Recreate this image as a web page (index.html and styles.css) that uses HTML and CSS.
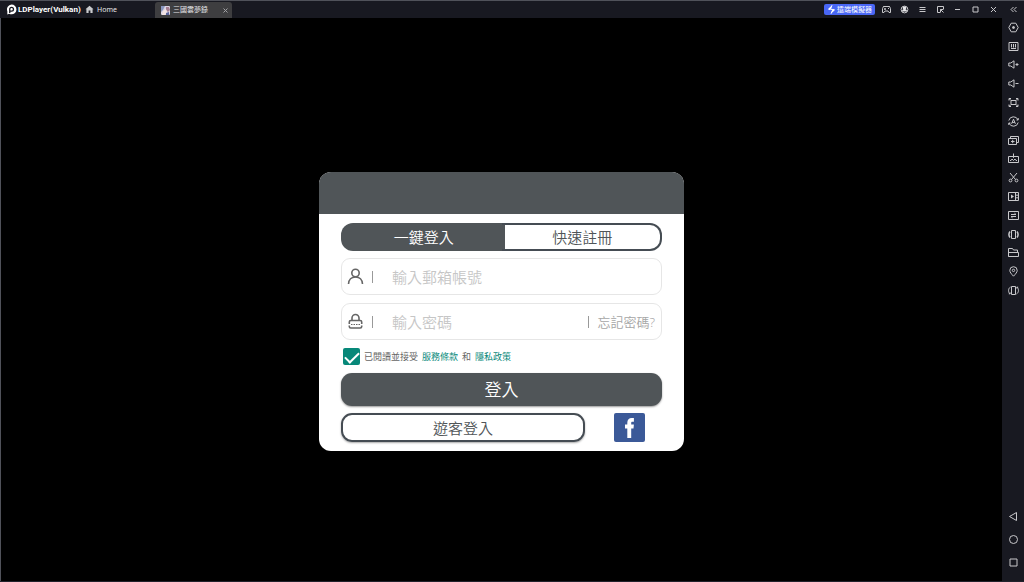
FILE: index.html
```
<!DOCTYPE html>
<html lang="zh-Hant">
<head>
<meta charset="utf-8">
<title>LDPlayer(Vulkan)</title>
<link rel="stylesheet" href="styles.css">
</head>
<body>
<div class="window">
  <header class="titlebar">
    <div class="brand">
      <svg class="brand-logo" viewBox="0 0 10 10"><path d="M5 .4a4.5 4.5 0 1 1 0 9 4.500 4.500 0 0 1-2-.5L1.200 9.500V6.500A4.500 4.500 0 0 1 5 .4z" fill="#fff"/><path d="M3.400 8.200V4.700a1.700 1.700 0 1 1 1.700 1.700H3.400" fill="none" stroke="#181921" stroke-width="1.200"/></svg>
      <span class="brand-name">LDPlayer(Vulkan)</span>
    </div>
    <a class="home" href="#">
      <svg class="home-icon" viewBox="0 0 9 9"><path d="M4.500.8 8.500 4.300H7.600V8H5.400V5.500H3.600V8H1.400V4.300H.5z" fill="#c9cacd"/></svg>
      <span>Home</span>
    </a>
    <div class="tab">
      <svg class="game-icon" viewBox="0 0 9 9"><rect width="9" height="9" rx="1" fill="#d9d3e2"/><path d="M0 0h4L2 4 0 6z" fill="#8794bd"/><path d="M5 1h3l1 3-2 2-2-2z" fill="#a37d90"/><path d="M2 5l3-2 1 3-2 3H1z" fill="#f3e4e3"/><path d="M5 7l3-1v3H5z" fill="#58639b"/></svg>
      <span class="tab-name">三國雲夢錄</span>
      <button class="tab-close" aria-label="關閉分頁"><svg class="x-icon" viewBox="0 0 5 5"><path d="M.5.5l4 4m0-4l-4 4"/></svg></button>
    </div>
    <button class="remote">
      <svg class="remote-icon" viewBox="0 0 9 9"><path d="M5 .3.800 4.300 3.200 5.200zM4 8.700l4.200-4L5.800 3.800z" fill="#fff"/><path d="M5 .3 3.500 4.200 5.800 4.600 4 8.700" fill="none" stroke="#fff"/></svg>
      <span>遠端模擬器</span>
    </button>
    <div class="window-tools">
      <button class="tool" aria-label="遊戲手把"><svg class="icon" viewBox="0 0 11 11"><path d="M2.500 2.500h6l1 2v4H8L7 7H4L3 8.500H1.500v-4zM3 5h2M4 4v2M7 4.500h1M2.500 2.500h2M6.500 2.500h2"/></svg></button>
      <button class="tool" aria-label="帳號"><svg class="icon" viewBox="0 0 11 11"><circle cx="5.500" cy="5.500" r="3.400"/><path d="M5.500 2.500a1.500 1.500 0 0 1 1 2.800c1 .4 1.500 1 1.500 2.200H3c0-1.200.5-1.800 1.500-2.200a1.500 1.500 0 0 1 1-2.800z" fill="#e6e6e8" stroke="none"/></svg></button>
      <button class="tool" aria-label="選單"><svg class="icon" viewBox="0 0 11 11"><path d="M2.500 3.500h6M2.500 5.500h6M2.500 7.500h6"/></svg></button>
      <button class="tool" aria-label="小視窗"><svg class="icon" viewBox="0 0 11 11"><path d="M5 8.500H2.500v-6h6V5M5.500 8.500v-3h3M5.500 5.500l3 3"/></svg></button>
      <button class="tool" aria-label="最小化"><svg class="icon" viewBox="0 0 11 11"><path d="M3 5.500h5"/></svg></button>
      <button class="tool" aria-label="最大化"><svg class="icon" viewBox="0 0 11 11"><path d="M3 3h5v5H3z"/></svg></button>
      <button class="tool" aria-label="關閉"><svg class="icon" viewBox="0 0 11 11"><path d="M3 3l5 5m0-5L3 8"/></svg></button>
    </div>
    <button class="collapse" aria-label="收合"><svg class="icon" viewBox="0 0 11 11"><path d="M5.500 3L3 5.500 5.500 8M8.500 3L6 5.500 8.500 8"/></svg></button>
  </header>

  <div class="workspace">
    <main class="screen">
      <form class="card">
        <div class="card-head"></div>
        <div class="card-body">
          <div class="modes">
            <button type="button" class="mode mode-on">一鍵登入</button>
            <button type="button" class="mode">快速註冊</button>
          </div>
          <div class="field">
            <svg class="field-icon" viewBox="0 0 17 17"><circle cx="8.500" cy="5" r="3.700"/><path d="M1.500 16c.2-4.200 3-7 7-7s6.800 2.800 7 7"/></svg>
            <span class="bar"></span>
            <input class="entry" type="text" aria-label="郵箱帳號" placeholder="輸入郵箱帳號">
          </div>
          <div class="field">
            <svg class="field-icon" viewBox="0 0 17 17"><path d="M5 7.500V5a3.500 3.500 0 0 1 7 0v2.500M2.300 11V9q0-1.500 1.500-1.500h9.400q1.500 0 1.500 1.500v2M2.300 12.500v1q0 1.500 1.500 1.500h9.400q1.500 0 1.500-1.500v-1"/><path d="M4 11.500h9.500" stroke-width="1" stroke-dasharray="1.500 1"/></svg>
            <span class="bar"></span>
            <input class="entry" type="password" aria-label="密碼" placeholder="輸入密碼">
            <span class="bar"></span>
            <a class="forgot" href="#">忘記密碼?</a>
          </div>
          <div class="terms">
            <input class="check" type="checkbox" id="agree" checked>
            <label for="agree">已閱讀並接受</label>
            <a href="#">服務條款</a>
            <span>和</span>
            <a href="#">隱私政策</a>
          </div>
          <button type="submit" class="login">登入</button>
          <div class="others">
            <button type="button" class="guest">遊客登入</button>
            <button type="button" class="facebook" aria-label="Facebook"><svg class="fb-icon" viewBox="0 0 31 29"><path d="M13.300 25V15.500H11v-4h2.300V9.800c0-3.200 1.700-4.900 4.500-4.900h2.100v3.800h-1.400c-1 0-1.300.5-1.300 1.400v1.400h2.700l-.4 4h-2.300V25z" fill="#fff"/></svg></button>
          </div>
        </div>
      </form>
    </main>

    <aside class="sidebar">
      <div class="actions">
        <button class="action" aria-label="設定"><svg class="icon" viewBox="0 0 11 11"><path d="M3.200 1.200h4.600l2.400 4.300-2.400 4.300H3.200L.8 5.500z"/><circle cx="5.500" cy="5.500" r="1" fill="#c8c8cb"/></svg></button>
        <button class="action" aria-label="鍵盤"><svg class="icon" viewBox="0 0 11 11"><path d="M1 1.500h9v8H1zM3.500 3v3.500M5.500 3v3.500M7.500 3v3.500M3 7.500h5"/></svg></button>
        <button class="action" aria-label="增加音量"><svg class="icon" viewBox="0 0 11 11"><path d="M.8 4h2L6 1.800v7.400L2.800 7h-2zM7.500 5.500h3M9 4v3"/></svg></button>
        <button class="action" aria-label="降低音量"><svg class="icon" viewBox="0 0 11 11"><path d="M.8 4h2L6 1.800v7.400L2.800 7h-2zM7.500 5.500h3"/></svg></button>
        <button class="action" aria-label="全螢幕"><svg class="icon" viewBox="0 0 11 11"><path d="M3 3.500h5v4H3zM1 3.500v-2h2M8 1.500h2v2M10 7.500v2H8M3 9.500H1v-2M1.500 2L3 3.500M9.500 2L8 3.500M1.500 9L3 7.500M9.500 9L8 7.500"/></svg></button>
        <button class="action" aria-label="同步"><svg class="icon" viewBox="0 0 11 11"><path d="M.8 4.500a4.800 4.800 0 0 1 9.200-.5M10.200 6.500a4.800 4.800 0 0 1-9.200.5M10.200 2v2H8.500M.8 9V7h1.700M3.600 7.800l1.900-4.600 1.900 4.600M4.200 6.400h2.600"/></svg></button>
        <button class="action" aria-label="多開"><svg class="icon" viewBox="0 0 11 11"><path d="M.5 3.500h8v6h-8zM2.500 3V1.500h8v6H9M3 6.500h3.500M4.700 4.800v3.400"/></svg></button>
        <button class="action" aria-label="安裝"><svg class="icon" viewBox="0 0 11 11"><path d="M4 3.500H.5v6h10v-6H7M5.500.5v4M4 3l1.500 1.500L7 3M2 7.500h1l1-1.500 1.500 1.500L7 6l1 1.500h1"/></svg></button>
        <button class="action" aria-label="截圖"><svg class="icon" viewBox="0 0 11 11"><path d="M2 1l5.500 6.500M9 1L3.500 7.500"/><circle cx="2.500" cy="8.500" r="1.400"/><circle cx="8.500" cy="8.500" r="1.400"/></svg></button>
        <button class="action" aria-label="錄影"><svg class="icon" viewBox="0 0 11 11"><path d="M.5 1.500h10v8H.5zM7.500 1.500v8M7.500 4.200h3M7.500 6.800h3"/><path d="M3 3.500v4L6 5.500z" fill="#c8c8cb" stroke="none"/></svg></button>
        <button class="action" aria-label="操作錄製"><svg class="icon" viewBox="0 0 11 11"><path d="M.5 1.500h10v8H.5zM3 4.500h5L6.500 3.200M8 6.500H3l1.500 1.300"/></svg></button>
        <button class="action" aria-label="震動"><svg class="icon" viewBox="0 0 11 11"><path d="M3.500 1.500h4v8h-4z"/><path d="M2 2.500C.7 4.300.7 6.700 2 8.500M9 2.500c1.300 1.800 1.300 4.200 0 6" stroke-width="1.500"/></svg></button>
        <button class="action" aria-label="共享資料夾"><svg class="icon" viewBox="0 0 11 11"><path d="M.5 9.500v-8h4L5.500 3H9.500v2M.5 5.500h10v4H.5z"/></svg></button>
        <button class="action" aria-label="定位"><svg class="icon" viewBox="0 0 11 11"><path d="M5.500 10.200C3.300 7.800 1.800 6.200 1.800 4.400a3.700 3.700 0 0 1 7.400 0c0 1.800-1.500 3.400-3.700 5.800z"/><circle cx="5.500" cy="4.400" r="1.200"/></svg></button>
        <button class="action" aria-label="旋轉"><svg class="icon" viewBox="0 0 11 11"><path d="M3.500 1.500h4v8h-4zM2.500 2C0 3.500 0 7 2 9M8.500 9c2.500-1.500 2.500-5 .5-7M.8 8.800H2.200V7.500M10.200 2.200H8.800v1.300"/></svg></button>
      </div>
      <div class="nav">
        <button class="nav-key" aria-label="返回"><svg class="icon" viewBox="0 0 11 11"><path d="M8.500 1.500v8L1.500 5.500z"/></svg></button>
        <button class="nav-key" aria-label="主畫面"><svg class="icon" viewBox="0 0 11 11"><circle cx="5.500" cy="5.500" r="4"/></svg></button>
        <button class="nav-key" aria-label="最近使用"><svg class="icon" viewBox="0 0 11 11"><path d="M2 2h7v7H2z"/></svg></button>
      </div>
    </aside>
  </div>
</div>
</body>
</html>
```
FILE: styles.css
```
* {
  box-sizing: border-box;
}

body {
  margin: 0;
  background: #000;
  font-family: "Noto Sans", "Noto Sans CJK TC", sans-serif;
}

button {
  margin: 0;
  padding: 0;
  border: 0;
  background: none;
  color: inherit;
  font: inherit;
}

a {
  color: inherit;
  text-decoration: none;
}

svg {
  display: block;
  flex: none;
}

.window {
  display: flex;
  flex-direction: column;
  min-height: 100vh;
  border-bottom: 1px solid #20222c;
}

.titlebar {
  display: flex;
  align-items: center;
  height: 18px;
  padding-left: 6px;
  border-top: 1px solid #50525a;
  background: #181921;
  color: #e6e6e8;
  font-size: 7px;
  line-height: 10px;
}

.brand {
  display: flex;
  align-items: center;
  gap: 1px;
  width: 79px;
}

.brand-logo {
  width: 11px;
  height: 11px;
}

.brand-name {
  color: #fff;
  font-family: Roboto, "Noto Sans", sans-serif;
  font-size: 8px;
  font-weight: 700;
  white-space: nowrap;
}

.home {
  display: flex;
  align-items: center;
  gap: 3px;
  width: 70px;
}

.home-icon {
  width: 9px;
  height: 9px;
}

.tab {
  display: flex;
  align-items: center;
  align-self: flex-end;
  gap: 3px;
  width: 77px;
  height: 16px;
  padding: 0 4px 0 6px;
  border-radius: 3px 3px 0 0;
  background: #3e3e40;
}

.game-icon {
  width: 9px;
  height: 9px;
}

.tab-close {
  margin-left: auto;
}

.x-icon {
  width: 5px;
  height: 5px;
  fill: none;
  stroke: #a2a2a5;
  stroke-width: 1;
}

.remote {
  display: flex;
  align-items: center;
  justify-content: center;
  gap: 1px;
  width: 51px;
  height: 11px;
  margin-left: auto;
  border-radius: 2px;
  background: #4967f5;
  color: #fff;
}

.remote-icon {
  width: 9px;
  height: 9px;
}

.window-tools {
  display: flex;
  width: 127px;
  padding-left: 3px;
}

.tool {
  display: flex;
  flex: 1;
  justify-content: center;
}

.collapse {
  display: flex;
  justify-content: center;
  width: 22px;
}

.icon {
  width: 11px;
  height: 11px;
  fill: none;
  stroke: #c8c8cb;
  stroke-width: 1;
}

.workspace {
  display: flex;
  flex: 1;
}

.screen {
  display: flex;
  flex: 1;
  align-items: center;
  justify-content: center;
  padding-top: 24px;
  border-left: 1px solid #50525a;
}

.sidebar {
  display: flex;
  flex-direction: column;
  justify-content: space-between;
  width: 22px;
  padding-bottom: 7px;
  background: #181921;
}

.actions {
  display: flex;
  flex-direction: column;
  height: 282px;
}

.action {
  display: flex;
  flex: 1;
  align-items: center;
  justify-content: center;
}

.nav-key {
  display: flex;
  align-items: center;
  justify-content: center;
  width: 100%;
  height: 23px;
}

.card {
  width: 365px;
  border-radius: 12px;
  overflow: hidden;
  background: #fff;
}

.card-head {
  height: 42px;
  background: #505558;
}

.card-body {
  display: flex;
  flex-direction: column;
  padding: 9px 22px;
  color: #505558;
  font-size: 15px;
  font-weight: 350;
  line-height: 20px;
}

.modes {
  display: grid;
  grid-template-columns: 51fr 49fr;
  height: 28px;
  padding: 2px;
  border-radius: 12px;
  background: linear-gradient(90deg, #505558 50%, #454c53 50%);
}

.mode {
  border-radius: 0 10px 10px 0;
  background: #fff;
  color: #505558;
}

.mode-on {
  border-radius: 10px 0 0 10px;
  background: #505558;
  color: #fff;
}

.field {
  display: flex;
  align-items: center;
  height: 37px;
  margin-top: 7px;
  padding: 0 6px 0 5px;
  border: 1px solid #e6e6e6;
  border-radius: 9px;
}

.field + .field {
  margin-top: 8px;
}

.field-icon {
  width: 17px;
  height: 17px;
  margin-right: 8px;
  fill: none;
  stroke: #666;
  stroke-width: 1.6;
}

.bar {
  width: 1px;
  height: 12px;
  background: #999;
}

.entry {
  flex: 1;
  min-width: 0;
  padding: 0 0 0 19px;
  border: 0;
  outline: 0;
  background: none;
  font: inherit;
}

.entry::placeholder {
  color: #c6c6c6;
}

.forgot {
  margin-left: 8px;
  color: #a6a6a6;
  font-size: 13px;
}

.terms {
  display: flex;
  align-items: center;
  gap: 4px;
  margin-top: 8px;
  padding-left: 2px;
  height: 17px;
  color: #666;
  font-size: 9px;
  font-weight: 400;
}

.terms a {
  color: #07897a;
}

.check {
  display: flex;
  justify-content: center;
  appearance: none;
  width: 17px;
  height: 17px;
  margin: 0;
  padding-top: 4px;
  border-radius: 2px;
  background: #078879;
}

.check:checked::before {
  content: "";
  width: 12px;
  height: 6px;
  border: solid #fff;
  border-width: 0 0 2px 2px;
  transform: rotate(-45deg);
}

.login {
  height: 33px;
  margin-top: 8px;
  border-radius: 11px;
  background: #505558;
  box-shadow: 0 1px 2px #999;
  color: #fff;
  font-size: 17px;
}

.others {
  display: flex;
  align-items: center;
  margin-top: 7px;
}

.guest {
  flex: 1;
  height: 29px;
  border: 2px solid #454c53;
  border-radius: 11px;
  box-shadow: 0 1px 2px #aaa;
}

.facebook {
  margin: 0 17px 0 29px;
  border-radius: 2px;
  background: #3b5998;
}

.fb-icon {
  width: 31px;
  height: 29px;
}
```
